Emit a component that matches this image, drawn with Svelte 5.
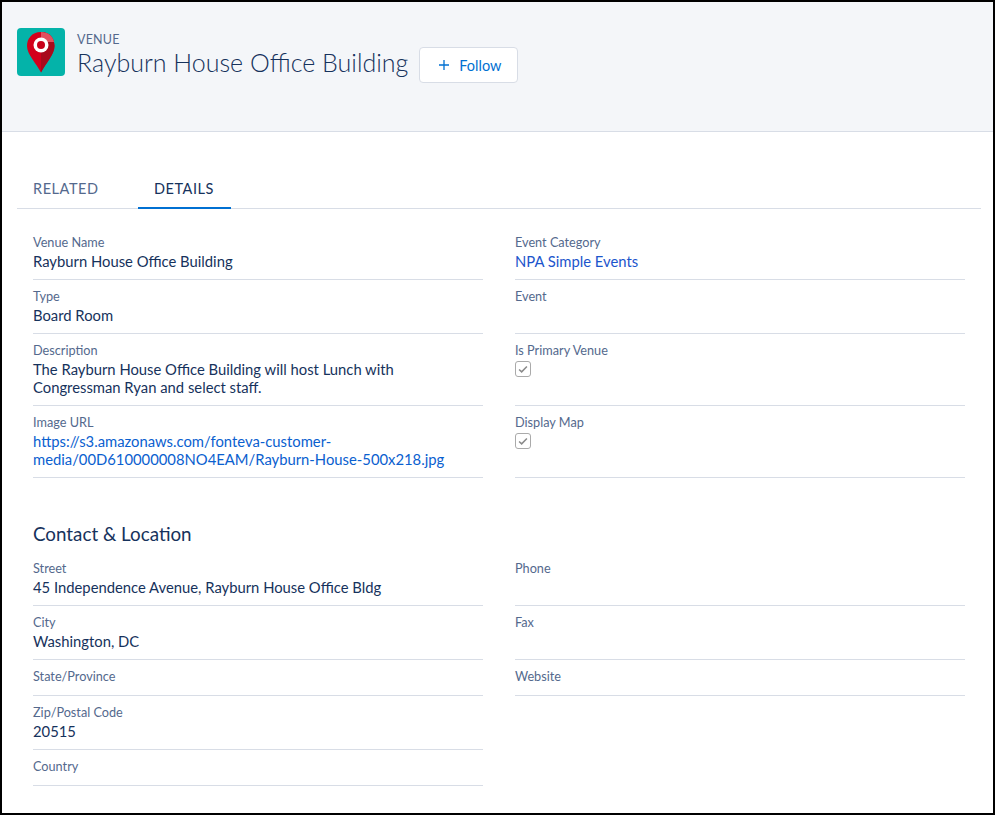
<script>
	const details = [
		{ label: 'Venue Name', lines: ['Rayburn House Office Building'] },
		{ label: 'Event Category', link: 'NPA Simple Events', dark: true },
		{ label: 'Type', lines: ['Board Room'] },
		{ label: 'Event' },
		{
			label: 'Description',
			lines: ['The Rayburn House Office Building will host Lunch with', 'Congressman Ryan and select staff.']
		},
		{ label: 'Is Primary Venue', checked: true },
		{
			label: 'Image URL',
			link: 'https://s3.amazonaws.com/fonteva-customer-media/00D610000008NO4EAM/Rayburn-House-500x218.jpg'
		},
		{ label: 'Display Map', checked: true }
	];

	const contact = [
		{ label: 'Street', lines: ['45 Independence Avenue, Rayburn House Office Bldg'] },
		{ label: 'Phone' },
		{ label: 'City', lines: ['Washington, DC'] },
		{ label: 'Fax' },
		{ label: 'State/Province' },
		{ label: 'Website' },
		{ label: 'Zip/Postal Code', lines: ['20515'] },
		{ blank: true },
		{ label: 'Country' }
	];
</script>

{#snippet field(f)}
	{#if f.blank}
		<div></div>
	{:else}
		<div class="field">
			<div class="label">{f.label}</div>
			{#if f.lines}
				<div class="value">
					{#each f.lines as l}<div>{l}</div>{/each}
				</div>
			{:else if f.link}
				<div class="value link" class:dark={f.dark}>{f.link}</div>
			{:else if f.checked}
				<div class="value">
					<span class="check">
						<svg viewBox="0 0 16 16" width="12" height="12">
							<path d="M2.8 8.6 L6.2 11.8 L13.2 4.6" fill="none" stroke="#8a8a8a" stroke-width="2" />
						</svg>
					</span>
				</div>
			{/if}
		</div>
	{/if}
{/snippet}

<div class="frame">
	<header class="head">
		<div class="icon">
			<svg viewBox="0 0 48 48" width="48" height="48">
				<path d="M24 4 C14.6 4 10 11 10 18 C10 26.5 19.5 35.5 24 44.5 C28.5 35.5 37.5 26.5 37.5 18 C37.5 11 33.4 4 24 4 Z" fill="#d3001c" />
				<path d="M24 4 C33.4 4 37.5 11 37.5 18 C37.5 26.5 28.5 35.5 24 44.5 Z" fill="#a80a1c" />
				<path d="M24 4 C31 4 35.8 8 37 14 L24 14 Z" fill="#e2505e" />
				<circle cx="24" cy="17" r="7.5" fill="#fff" />
				<circle cx="24" cy="17" r="4" fill="#c8001a" />
			</svg>
		</div>
		<div class="titles">
			<div class="kind">VENUE</div>
			<h1>Rayburn House Office Building</h1>
		</div>
		<button class="follow">
			<svg viewBox="0 0 12 12" width="12" height="12">
				<path d="M6 1 V11 M1 6 H11" stroke="#0070d2" stroke-width="1.3" fill="none" />
			</svg>
			Follow
		</button>
	</header>

	<main class="body">
		<nav class="tabs">
			<span class="tab">RELATED</span>
			<span class="tab active">DETAILS</span>
		</nav>

		<div class="grid">
			{#each details as f}
				{@render field(f)}
			{/each}
		</div>

		<h2>Contact &amp; Location</h2>

		<div class="grid">
			{#each contact as f}
				{@render field(f)}
			{/each}
		</div>
	</main>
</div>

<style>
	:global(body) {
		margin: 0;
		overflow: hidden;
		background: #fff;
	}

	.frame {
		box-sizing: border-box;
		width: 995px;
		height: 815px;
		border: 2px solid #000;
		font-family: Lato, 'Open Sans', sans-serif;
		color: #16325c;
		overflow: hidden;
	}

	.head {
		display: flex;
		align-items: flex-start;
		height: 129px;
		padding: 0 0 0 15px;
		background: #f4f6f9;
		border-bottom: 1px solid #d8dde6;
	}

	.icon {
		width: 48px;
		height: 48px;
		margin-top: 26px;
		background: #04b3a9;
		border-radius: 4px;
	}

	.icon svg {
		display: block;
	}

	.titles {
		margin: 29px 0 0 12px;
	}

	.kind {
		font-size: 12.5px;
		line-height: 18px;
		color: #54698d;
		letter-spacing: 0.2px;
	}

	h1 {
		margin: 0;
		font-size: 25px;
		font-weight: 300;
		line-height: 27px;
		white-space: nowrap;
	}

	.follow {
		display: flex;
		align-items: center;
		gap: 9px;
		box-sizing: border-box;
		width: 99px;
		height: 36px;
		margin: 45px 0 0 11px;
		padding: 0 0 0 18px;
		background: #fff;
		border: 1px solid #d8dde6;
		border-radius: 4px;
		font: inherit;
		font-size: 14.5px;
		color: #0070d2;
	}

	.body {
		padding: 0 12px 0 15px;
	}

	.tabs {
		display: flex;
		height: 77px;
		box-sizing: border-box;
		padding-top: 37px;
		border-bottom: 1px solid #d8dde6;
	}

	.tab {
		box-sizing: border-box;
		height: 40px;
		padding: 11px 16px 0;
		font-size: 14.5px;
		line-height: 18px;
		letter-spacing: 0.55px;
		color: #54698d;
	}

	.tab:first-child {
		width: 121px;
	}

	.tab.active {
		width: 93px;
		color: #16325c;
		border-bottom: 2px solid #0070d2;
	}

	.grid {
		display: grid;
		grid-template-columns: 450px 450px;
		column-gap: 32px;
		padding-left: 16px;
		margin-top: 17px;
	}

	.grid:last-child {
		margin-top: 0;
	}

	.field {
		padding: 7px 0 9px;
		border-bottom: 1px solid #d8dde6;
	}

	.label {
		height: 19px;
		font-size: 12.7px;
		line-height: 18px;
		color: #54698d;
	}

	.value {
		font-size: 14.8px;
		line-height: 18px;
		color: #16325c;
	}

	.link {
		color: #0a60cf;
	}

	.dark {
		color: #1c55cc;
	}

	.check {
		display: flex;
		align-items: center;
		justify-content: center;
		box-sizing: border-box;
		width: 16px;
		height: 16px;
		margin-top: 1px;
		border: 1px solid #aaa;
		border-radius: 3px;
		background: #fff;
	}

	h2 {
		margin: 44px 0 0 16px;
		font-size: 18.8px;
		font-weight: 400;
		line-height: 24px;
		height: 30px;
		color: #16325c;
	}
</style>
